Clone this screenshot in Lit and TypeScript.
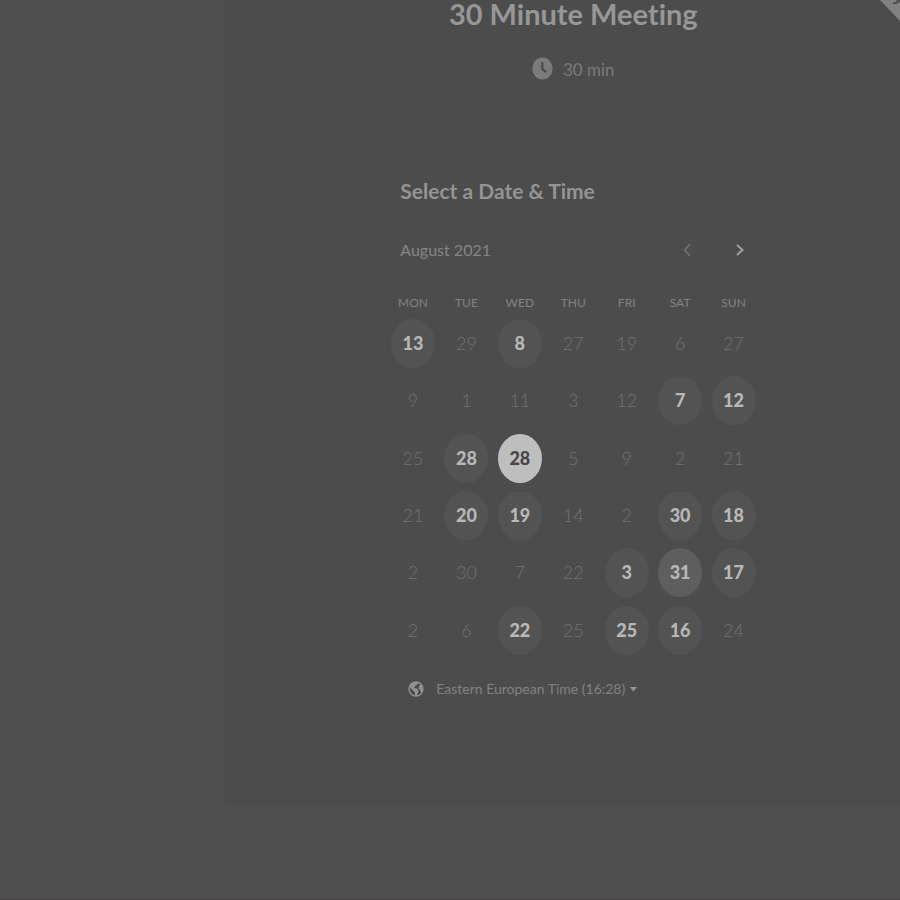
import { LitElement, html, css, svg } from "lit";
import { customElement, state } from "lit/decorators.js";
import { classMap } from "lit/directives/class-map.js";

type Day = { label: number; kind: "off" | "open" | "hover" | "today" };

const off = (label: number): Day => ({ label, kind: "off" });
const open = (label: number): Day => ({ label, kind: "open" });
const hover = (label: number): Day => ({ label, kind: "hover" });
const today = (label: number): Day => ({ label, kind: "today" });

const DAY_NAMES = ["MON", "TUE", "WED", "THU", "FRI", "SAT", "SUN"];

const WEEKS: Day[][] = [
  [open(13), off(29), open(8), off(27), off(19), off(6), off(27)],
  [off(9), off(1), off(11), off(3), off(12), open(7), open(12)],
  [off(25), open(28), today(28), off(5), off(9), off(2), off(21)],
  [off(21), open(20), open(19), off(14), off(2), open(30), open(18)],
  [off(2), off(30), off(7), off(22), open(3), hover(31), open(17)],
  [off(2), off(6), open(22), off(25), open(25), open(16), off(24)],
];

@customElement("app-root")
export class AppRoot extends LitElement {
  @state() private weeks = WEEKS;

  static styles = css`
    :host {
      display: block;
      position: relative;
      box-sizing: border-box;
      min-height: 100vh;
      overflow: hidden;
      background: #4e4e4e;
      border-bottom: 1px solid #463f43;
      color: #8d8d8d;
      font-family: Lato, "Open Sans", sans-serif;
      font-variant-ligatures: none;
    }
    * {
      box-sizing: border-box;
    }
    .card {
      margin-left: 25%;
      margin-right: -2.4%;
      padding-bottom: 106px;
      background: #4c4c4c;
      border-radius: 0 0 8px 8px;
      display: flex;
      flex-direction: column;
      align-items: center;
    }
    h1 {
      margin: 0;
      font-size: 29px;
      line-height: 28px;
      font-weight: 700;
      color: #979797;
    }
    .duration {
      display: flex;
      align-items: center;
      gap: 10px;
      margin: 28px 0 0;
      font-size: 17px;
      line-height: 28px;
      font-weight: 400;
      color: #7b7b7b;
    }
    .duration svg {
      width: 21px;
      height: 23px;
      margin-bottom: 4px;
    }
    .picker {
      width: 374px;
      max-width: 100%;
      margin-top: 93px;
    }
    h2 {
      margin: 0;
      padding-left: 14px;
      font-size: 21px;
      line-height: 28px;
      font-weight: 700;
      color: #949494;
    }
    .month {
      display: flex;
      align-items: center;
      justify-content: space-between;
      margin-top: 30px;
      padding: 0 6px 0 14px;
      font-size: 16px;
      line-height: 30px;
      color: #858585;
    }
    .arrows {
      display: flex;
      gap: 22px;
    }
    button {
      font-family: inherit;
      border: 0;
      margin: 0;
      padding: 0;
      background: none;
      color: inherit;
    }
    .arrows button {
      width: 30px;
      height: 30px;
      display: grid;
      place-items: center;
      color: #a2a2a2;
    }
    .arrows button:disabled {
      color: #7a7a7a;
    }
    table {
      width: 100%;
      height: 368px;
      margin-top: 26px;
      border-collapse: collapse;
      table-layout: fixed;
    }
    th {
      height: 24px;
      padding: 0;
      font-size: 12px;
      line-height: 16px;
      font-weight: 400;
      color: #838383;
    }
    td {
      padding: 0;
      text-align: center;
      vertical-align: middle;
    }
    .day {
      display: block;
      margin: 0 auto;
      width: 44px;
      height: 49px;
      border-radius: 50%;
      font-size: 18px;
      line-height: 49px;
      font-weight: 300;
      color: #727272;
    }
    .open,
    .hover,
    .today {
      font-weight: 900;
    }
    .open {
      background: #535353;
      color: #b8b8b8;
    }
    .hover {
      background: #5e5e5e;
      color: #b8b8b8;
    }
    .today {
      background: #bebebe;
      color: #484848;
    }
    .zone {
      display: flex;
      align-items: center;
      margin-top: 20px;
      padding-left: 22px;
      font-size: 14px;
      line-height: 20px;
      color: #828282;
    }
    .zone .name {
      margin: 0 5px 0 12px;
    }
    .ribbon {
      position: absolute;
      top: 0;
      right: 0;
      width: 22px;
      height: 23px;
    }
  `;

  private renderChevron(path: string, weight: number) {
    return svg`<svg width="10" height="14" viewBox="0 0 10 14" aria-hidden="true">
      <path d=${path} fill="none" stroke="currentColor" stroke-width=${weight} />
    </svg>`;
  }

  private renderDay(day: Day) {
    return html`<td>
      <button
        class=${classMap({ day: true, [day.kind]: true })}
        ?disabled=${day.kind === "off"}
      >${day.label}</button>
    </td>`;
  }

  render() {
    return html`
      <main class="card">
        <h1>30 Minute Meeting</h1>
        <p class="duration">
          <svg viewBox="0 0 21 23" aria-hidden="true">
            <ellipse cx="10.5" cy="11.5" rx="10.2" ry="11" fill="#7b7b7b" />
            <path d="M10.3 5v7.200l4 3" fill="none" stroke="#4b4b4b" stroke-width="2.200" />
          </svg>
          <span>30 min</span>
        </p>
        <section class="picker">
          <h2>Select a Date &amp; Time</h2>
          <div class="month">
            <span>August 2021</span>
            <div class="arrows">
              <button disabled aria-label="Previous month">
                ${this.renderChevron("M8 1L2.500 7l5.500 6", 1.2)}
              </button>
              <button aria-label="Next month">
                ${this.renderChevron("M3 2L8.500 7l-5.500 5", 2)}
              </button>
            </div>
          </div>
          <table>
            <thead>
              <tr>${DAY_NAMES.map((name) => html`<th scope="col">${name}</th>`)}</tr>
            </thead>
            <tbody>
              ${this.weeks.map((week) => html`<tr>${week.map((day) => this.renderDay(day))}</tr>`)}
            </tbody>
          </table>
          <button class="zone">
            <svg width="16" height="16" viewBox="0 0 16 16" aria-hidden="true">
              <circle cx="8" cy="8" r="7" fill="#4b4b4b" stroke="#939393" stroke-width="1.300" />
              <path
                d="M2 4.500L5 1.500l4-.5 1 1.500-1.500 1.500-1.500.5v1.500L5.500 7l3.500.5 1.500 2-.5 2L8.500 15l-1.500-.5v-3L5 9.500 1.500 6zM11 5l2-1.500L15 7l-.5 4-1.500.5-1-2.500-1.500-1.500z"
                fill="#939393"
              />
            </svg>
            <span class="name">Eastern European Time (16:28)</span>
            <svg width="7" height="5" viewBox="0 0 7 5" aria-hidden="true">
              <path d="M0 0h7L3.500 4.500z" fill="#959595" />
            </svg>
          </button>
        </section>
      </main>
      <svg class="ribbon" viewBox="0 0 22 23" aria-hidden="true">
        <path d="M2 0H22V21z" fill="#818181" />
        <path d="M15 3q3 1 4-1l1-2M19 2l3-1" fill="none" stroke="#4d4d4d" stroke-width="2" />
      </svg>
    `;
  }
}
